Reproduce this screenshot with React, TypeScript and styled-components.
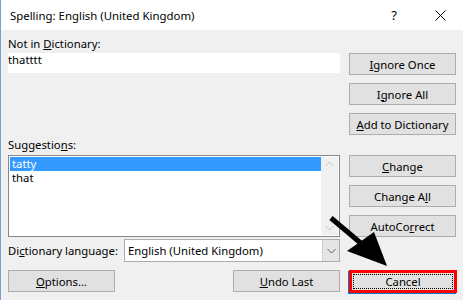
import React from "react";
import styled, { createGlobalStyle } from "styled-components";

const GlobalStyle = createGlobalStyle`
  html, body {
    margin: 0;
    padding: 0;
    background: #f0f0f0;
  }
  body {
    font-family: "Noto Sans", "Open Sans", sans-serif;
    font-size: 11.3px;
    color: #000;
  }
`;

const Window = styled.div`
  position: relative;
  width: 463px;
  height: 300px;
  overflow: hidden;
  box-sizing: border-box;
  border-left: 1px solid #7a9fd4;
  background: #f0f0f0;
`;

const TitleBar = styled.div`
  height: 30px;
  background: #fff;
  display: flex;
  align-items: center;
  padding-left: 9px;
`;

const Title = styled.div`
  flex: 1;
  font-size: 11.4px;
`;

const TitleButton = styled.div`
  width: 46px;
  height: 30px;
  display: flex;
  align-items: center;
  justify-content: center;
  font-size: 13px;
`;

const Body = styled.div`
  display: flex;
  gap: 9px;
  padding-left: 7px;
`;

const LeftColumn = styled.div`
  width: 332px;
  display: flex;
  flex-direction: column;
`;

const RightColumn = styled.div`
  width: 107px;
  display: flex;
  flex-direction: column;
  padding-top: 23px;
`;

const Label = styled.div<{ $top: number }>`
  height: 16px;
  line-height: 16px;
  margin-top: ${(p) => p.$top}px;
  white-space: nowrap;
`;

const TextBox = styled.div`
  height: 20px;
  margin-top: 1px;
  background: #fff;
  line-height: 14px;
`;

const ListBox = styled.div`
  height: 82px;
  margin-top: 2px;
  box-sizing: border-box;
  border: 1px solid #828790;
  background: #fff;
  display: flex;
  padding: 1px;
`;

const Items = styled.div`
  flex: 1;
  display: flex;
  flex-direction: column;
`;

const Item = styled.div<{ $selected?: boolean }>`
  height: 14px;
  line-height: 14px;
  padding-left: 2px;
  background: ${(p) => (p.$selected ? "#3399ff" : "transparent")};
  color: ${(p) => (p.$selected ? "#fff" : "#000")};
`;

const ScrollBar = styled.div`
  width: 17px;
  background: #f0f0f0;
  display: flex;
  flex-direction: column;
  justify-content: space-between;
  align-items: center;
  padding: 4px 0;
`;

const LanguageRow = styled.div`
  display: flex;
  align-items: center;
  margin-top: 2px;
  height: 23px;
`;

const LanguageLabel = styled.div`
  width: 116px;
  white-space: nowrap;
`;

const Combo = styled.div`
  flex: 1;
  height: 23px;
  box-sizing: border-box;
  border: 1px solid #adadad;
  background: #fff;
  display: flex;
  align-items: center;
`;

const ComboText = styled.div`
  flex: 1;
  padding-left: 3px;
`;

const ComboArrow = styled.div`
  width: 16px;
  height: 21px;
  background: #e5e5e5;
  border-left: 1px solid #d0d0d0;
  display: flex;
  align-items: center;
  justify-content: center;
`;

const BottomRow = styled.div`
  display: flex;
  justify-content: space-between;
  margin-top: 8px;
`;

const Button = styled.div<{ $gap?: number }>`
  width: 107px;
  height: 22px;
  margin-top: ${(p) => p.$gap ?? 0}px;
  box-sizing: border-box;
  border: 1px solid #adadad;
  background: #e1e1e1;
  display: flex;
  align-items: center;
  justify-content: center;
  white-space: nowrap;
`;

const CancelButton = styled.div`
  width: 108px;
  height: 23px;
  margin-top: 33px;
  box-sizing: border-box;
  border: 3px solid #ff0000;
  box-shadow: -1px 1px 0 #0078d7;
  background: #e1e1e1;
  padding: 1px;
  display: flex;
`;

const FocusRect = styled.div`
  flex: 1;
  border: 1px dotted #000;
  display: flex;
  align-items: center;
  justify-content: center;
`;

const Arrow = styled.svg`
  position: absolute;
  left: 0;
  top: 0;
  pointer-events: none;
`;

const Chevron = ({ up, color }: { up?: boolean; color: string }) => (
  <svg width="9" height="6" viewBox="0 0 9 6">
    <path
      d={up ? "M0.5 5 L4.5 1 L8.5 5" : "M0.5 1 L4.5 5 L8.5 1"}
      fill="none"
      stroke={color}
      strokeWidth="1"
    />
  </svg>
);

export default function App() {
  return (
    <Window>
      <GlobalStyle />
      <TitleBar>
        <Title>Spelling: English (United Kingdom)</Title>
        <TitleButton>?</TitleButton>
        <TitleButton>
          <svg width="11" height="11" viewBox="0 0 11 11">
            <path d="M0.5 0.5 L10.5 10.5 M10.5 0.5 L0.5 10.5" stroke="#000" strokeWidth="1" />
          </svg>
        </TitleButton>
      </TitleBar>
      <Body>
        <LeftColumn>
          <Label $top={6}>
            Not in <u>D</u>ictionary:
          </Label>
          <TextBox>thatttt</TextBox>
          <Label $top={64}>
            Suggestio<u>n</u>s:
          </Label>
          <ListBox>
            <Items>
              <Item $selected>tatty</Item>
              <Item>that</Item>
            </Items>
            <ScrollBar>
              <Chevron up color="#c2c2c2" />
              <Chevron color="#c2c2c2" />
            </ScrollBar>
          </ListBox>
          <LanguageRow>
            <LanguageLabel>
              Di<u>c</u>tionary language:
            </LanguageLabel>
            <Combo>
              <ComboText>English (United Kingdom)</ComboText>
              <ComboArrow>
                <Chevron color="#606060" />
              </ComboArrow>
            </Combo>
          </LanguageRow>
          <BottomRow>
            <Button>
              <u>O</u>ptions...
            </Button>
            <Button>
              <u>U</u>ndo Last
            </Button>
          </BottomRow>
        </LeftColumn>
        <RightColumn>
          <Button>
            <u>I</u>gnore Once
          </Button>
          <Button $gap={8}>
            I<u>g</u>nore All
          </Button>
          <Button $gap={8}>
            <u>A</u>dd to Dictionary
          </Button>
          <Button $gap={20}>
            <u>C</u>hange
          </Button>
          <Button $gap={8}>
            Change A<u>l</u>l
          </Button>
          <Button $gap={8}>
            AutoCo<u>r</u>rect
          </Button>
          <CancelButton>
            <FocusRect>Cancel</FocusRect>
          </CancelButton>
        </RightColumn>
      </Body>
      <Arrow width="463" height="300" viewBox="0 0 463 300">
        <line x1="330" y1="218" x2="362" y2="245" stroke="#000" strokeWidth="5" />
        <polygon points="346,251 373,232 386,266" fill="#000" />
      </Arrow>
    </Window>
  );
}
